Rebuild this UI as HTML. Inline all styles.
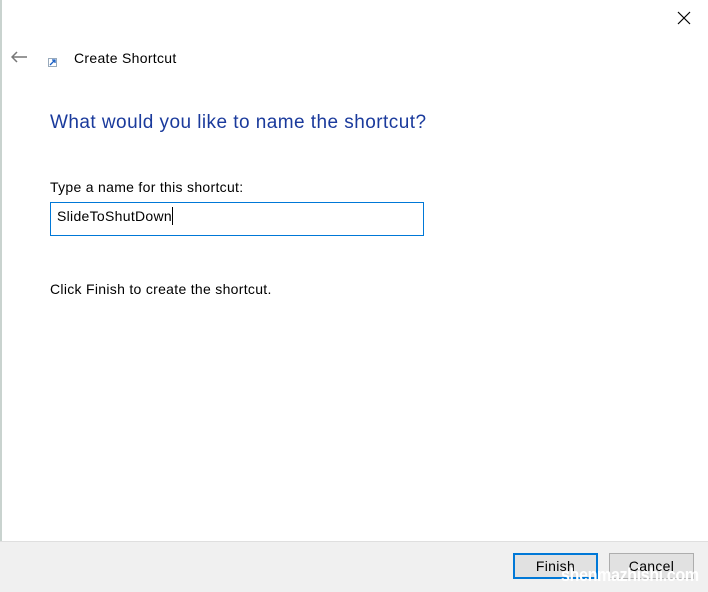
<!DOCTYPE html>
<html><head><meta charset="utf-8"><style>
*{margin:0;padding:0;box-sizing:border-box}
body{width:708px;height:592px;background:#fff;position:relative;overflow:hidden;font-family:"Liberation Sans",sans-serif;color:#000}
.lb{position:absolute;left:0;top:0;width:2px;height:541px;background:#c9d3cf}
.abs{position:absolute;white-space:nowrap;letter-spacing:0.3px}
.foot{position:absolute;left:0;top:541px;width:708px;height:51px;background:#f0f0f0;border-top:1px solid #dfdfdf}
.btn{position:absolute;top:553px;width:85px;height:26px;background:#e1e1e1;border:1px solid #adadad;font-size:14px;text-align:center;line-height:24px;letter-spacing:0.3px}
</style></head><body>
<div class="lb"></div>
<svg class="abs" style="left:677px;top:11px" width="14" height="14"><path d="M1 1L13 13M13 1L1 13" stroke="#000" stroke-width="1.2"/></svg>
<svg class="abs" style="left:11px;top:51px" width="17" height="12"><path d="M1 6H16M6 1L1 6L6 11" stroke="#777" stroke-width="1.5" fill="none"/></svg>
<div class="abs" style="left:48px;top:58px;width:9px;height:9px;background:#fff;border:1px solid #9ab"><svg width="7" height="7" style="display:block"><path d="M1 6L6 1M3 1H6V4" stroke="#1a5fc4" stroke-width="1.3" fill="none"/></svg></div>
<div class="abs" style="left:74px;top:50px;font-size:14px">Create Shortcut</div>
<div class="abs" style="left:50px;top:112px;font-size:19px;color:#1a3a9c;letter-spacing:0.45px">What would you like to name the shortcut?</div>
<div class="abs" style="left:50px;top:179px;font-size:14px">Type a name for this shortcut:</div>
<div class="abs" style="left:50px;top:202px;width:374px;height:34px;border:1px solid #0078d7"></div>
<div class="abs" style="left:57px;top:207px;font-size:14px">SlideToShutDown<span style="display:inline-block;width:1px;height:18px;background:#000;vertical-align:-4px"></span></div>
<div class="abs" style="left:50px;top:281px;font-size:14px">Click Finish to create the shortcut.</div>
<div class="foot"></div>
<div class="btn" style="left:513px;border:2px solid #0078d7;line-height:22px">Finish</div>
<div class="btn" style="left:609px">Cancel</div>
<div class="abs" style="left:561px;top:565px;font-size:18px;font-weight:bold;color:#fff;letter-spacing:-0.5px;transform:scaleX(0.9);transform-origin:left">shenmazhishi.com</div>
</body></html>
